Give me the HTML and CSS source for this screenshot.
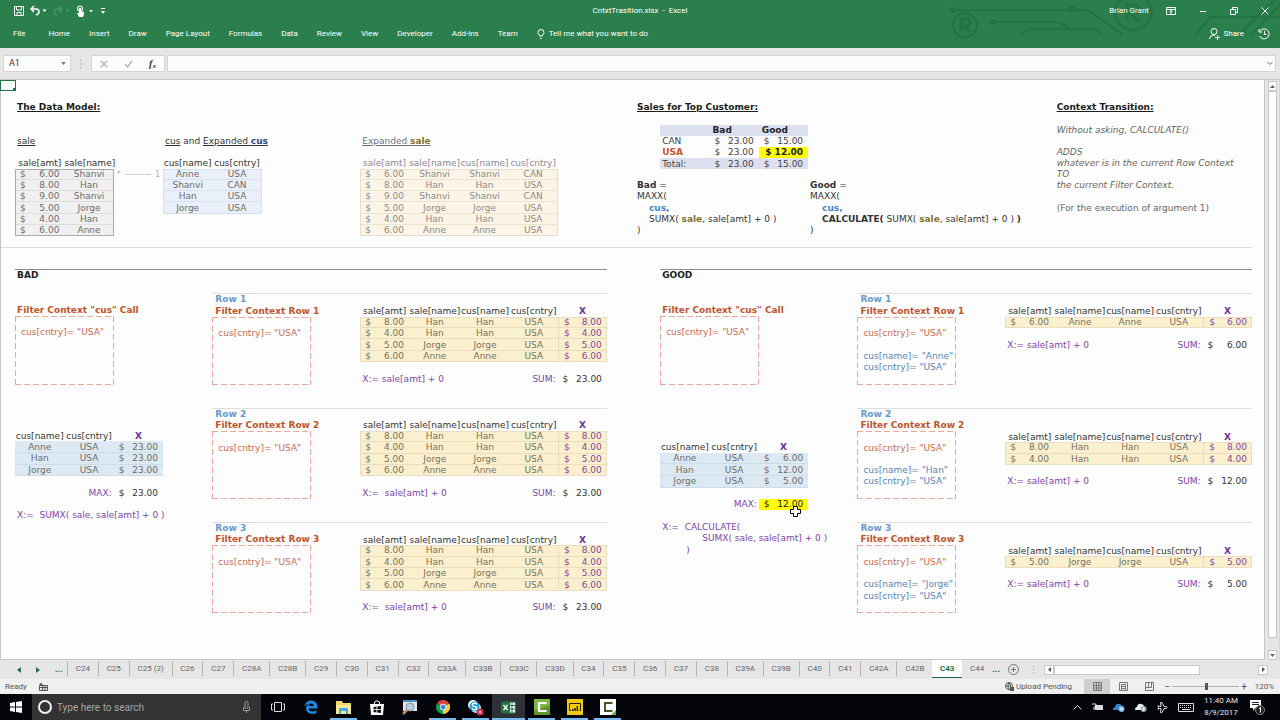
FILE: index.html
```html
<!DOCTYPE html>
<html lang="en">
<head>
<meta charset="utf-8">
<title>CntxtTrasition.xlsx - Excel</title>
<link rel="stylesheet" href="styles.css">
</head>
<body>
<header class="ribbon">
  <svg class="circuit" width="330" height="48" viewBox="0 0 330 48" fill="none" stroke="#1f6e3e" stroke-width="2">
    <path d="M2 10H138L172 34M42 22H108L120 28M70 34L80 29H146L152 34M246 35L260 17H330M290 34L324 0M302 34L330 4"/>
    <circle cx="15" cy="25" r="12"/><circle cx="183" cy="12" r="18" stroke-width="3"/>
    <path d="M11 31V19H16Q20 19 20 22T16 25H12L20 31M177 20V5H184Q190 5 190 9T184 13H178L190 21" stroke-width="3"/>
    <circle cx="3" cy="10" r="2"/><circle cx="43" cy="22" r="2"/><circle cx="122" cy="9" r="2"/>
  </svg>
  <div class="titlebar">
    <div class="quick">
      <button aria-label="Save"><svg width="10" height="11" viewBox="0 0 10 11" fill="none" stroke="#fff"><path d="M.5 1.500H9.500V10.500H.5ZM2.500 1.500V5H7.500V1.500M3 10V7.500H7V10"/></svg></button>
      <button aria-label="Undo"><svg width="17" height="11" viewBox="0 0 17 11" fill="none" stroke="#fff" stroke-width="1.500"><path d="M4 1L1 4L4 7M1 4H6Q9 4 9 7Q9 9 6 10"/><path d="M12.500 4.500H16.500L14.500 7Z" fill="#fff" stroke="none"/></svg></button>
      <button aria-label="Redo" class="dim"><svg width="17" height="11" viewBox="0 0 17 11" fill="none" stroke="#6fae86" stroke-width="1.500"><path d="M6 1L9 4L6 7M9 4H4Q1 4 1 7Q1 9 4 10"/><path d="M12.500 4.500H16.500L14.500 7Z" fill="#6fae86" stroke="none"/></svg></button>
      <button aria-label="Touch mode"><svg width="18" height="12" viewBox="0 0 18 12"><circle cx="4" cy="3.500" r="2.500" fill="none" stroke="#fff" stroke-width="1.200"/><path d="M3 3H5V6L8 7V9L7 12H3L1 8L3 8Z" fill="#fff"/><path d="M13 5H17L15 7.500Z" fill="#fff"/></svg></button>
      <button aria-label="Customize toolbar"><svg width="6" height="8" viewBox="0 0 6 8"><path d="M1 1H5V2H1ZM1 4H5L3 7Z" fill="#fff"/></svg></button>
    </div>
    <h1 class="doc-title">CntxtTrasition.xlsx&nbsp; -&nbsp; Excel</h1>
    <div class="window">
      <span class="user">Brian Grant</span>
      <button aria-label="Ribbon display"><svg width="10" height="8" viewBox="0 0 10 8" fill="none" stroke="#fff"><path d="M.5.500H9.500V7.500H.5ZM.5 2.500H9.500M5 7V3.500M3.500 5L5 3.500L6.500 5"/></svg></button>
      <button aria-label="Minimize"><svg width="8" height="8" viewBox="0 0 8 8" stroke="#fff"><path d="M1 4.500H7"/></svg></button>
      <button aria-label="Restore"><svg width="8" height="8" viewBox="0 0 8 8" fill="none" stroke="#fff"><path d="M.5 2.500H5.500V7.500H.5ZM2.500 2.500V.5H7.500V5.500H5.500"/></svg></button>
      <button aria-label="Close"><svg width="8" height="8" viewBox="0 0 8 8" stroke="#fff"><path d="M.5.500L7.500 7.500M7.500.500L.5 7.500"/></svg></button>
    </div>
  </div>
  <nav class="menu">
    <button class="file">File</button><button>Home</button><button>Insert</button><button>Draw</button><button>Page Layout</button><button>Formulas</button><button>Data</button><button>Review</button><button>View</button><button>Developer</button><button>Add-ins</button><button>Team</button>
    <button class="tell"><svg width="8" height="10" viewBox="0 0 8 10" fill="none" stroke="#fff"><path d="M2.500 7V6Q1 5 1 3.500A3 3 0 0 1 7 3.500Q7 5 5.500 6V7ZM3 9.500H5"/></svg>Tell me what you want to do</button>
    <button class="share"><svg width="11" height="12" viewBox="0 0 11 12" fill="none" stroke="#fff"><circle cx="5" cy="3.500" r="3"/><path d="M.5 11Q1 7 5 7L6 7.500M8.500 7V12M6 9.500H11"/></svg>Share</button>
    <button aria-label="History"><svg width="12" height="12" viewBox="0 0 12 12" fill="none" stroke="#fff"><path d="M2 3A5 5 0 1 1 1.500 8M1 1V4H4M6.500 3V6.500H8.500"/></svg></button>
  </nav>
</header>

<div class="formula-bar">
  <button class="name-box">A1<svg width="5" height="3" viewBox="0 0 6 4"><path d="M0 0H6L3 4Z" fill="#777"/></svg></button>
  <svg class="grip" width="2" height="10" viewBox="0 0 2 10" fill="#bbb"><path d="M0 0H1V2H0ZM0 4H1V6H0ZM0 8H1V10H0Z"/></svg>
  <div class="fx-buttons">
    <button aria-label="Cancel"><svg width="8" height="8" viewBox="0 0 8 8" stroke="#b5b5b5" stroke-width="1.500"><path d="M1 1L7 7M7 1L1 7"/></svg></button>
    <button aria-label="Enter"><svg width="9" height="8" viewBox="0 0 9 8" fill="none" stroke="#b5b5b5" stroke-width="1.500"><path d="M1 4L3.500 7L8 1"/></svg></button>
    <button class="fx" aria-label="Insert function">f<small>x</small></button>
  </div>
  <div class="entry"><input type="text" aria-label="Formula"><svg width="6" height="5" viewBox="0 0 6 5" fill="none" stroke="#666"><path d="M.5 1L3 3.500L5.500 1"/></svg></div>
</div>

<div class="workspace">
<main class="sheet">
  <span class="active-cell"></span>
  <section class="overview">
    <h2 class="t-model under">The Data Model:</h2>
    <div class="t-sale"><u>sale</u></div>
    <table class="tbl gray g-sale">
      <thead><tr><th>sale[amt]</th><th>sale[name]</th></tr></thead>
      <tbody>
      <tr><td class="m"><i>$</i>6.00</td><td>Shanvi</td></tr><tr><td class="m"><i>$</i>8.00</td><td>Han</td></tr><tr><td class="m"><i>$</i>9.00</td><td>Shanvi</td></tr><tr><td class="m"><i>$</i>5.00</td><td>Jorge</td></tr><tr><td class="m"><i>$</i>4.00</td><td>Han</td></tr><tr><td class="m"><i>$</i>6.00</td><td>Anne</td></tr>
      </tbody>
    </table>
    <div class="relation"><span>*</span><hr><span>1</span></div>
    <div class="t-cus"><u>cus</u> and <u>Expanded <b class="navy">cus</b></u></div>
    <table class="tbl pale g-cus">
      <thead><tr><th>cus[name]</th><th>cus[cntry]</th></tr></thead>
      <tbody><tr><td>Anne</td><td>USA</td></tr><tr><td>Shanvi</td><td>CAN</td></tr><tr><td>Han</td><td>USA</td></tr><tr><td>Jorge</td><td>USA</td></tr></tbody>
    </table>
    <div class="t-exp"><u>Expanded <b class="olive">sale</b></u></div>
    <table class="tbl cream g-exp">
      <thead><tr><th>sale[amt]</th><th class="wide">sale[name]</th><th>cus[name]</th><th>cus[cntry]</th></tr></thead>
      <tbody>
      <tr><td class="m"><i>$</i>6.00</td><td>Shanvi</td><td>Shanvi</td><td>CAN</td></tr>
      <tr><td class="m"><i>$</i>8.00</td><td>Han</td><td>Han</td><td>USA</td></tr>
      <tr><td class="m"><i>$</i>9.00</td><td>Shanvi</td><td>Shanvi</td><td>CAN</td></tr>
      <tr><td class="m"><i>$</i>5.00</td><td>Jorge</td><td>Jorge</td><td>USA</td></tr>
      <tr><td class="m"><i>$</i>4.00</td><td>Han</td><td>Han</td><td>USA</td></tr>
      <tr><td class="m"><i>$</i>6.00</td><td>Anne</td><td>Anne</td><td>USA</td></tr>
      </tbody>
    </table>
    <h2 class="t-top under">Sales for Top Customer:</h2>
    <table class="tbl summary g-sum">
      <thead><tr><th></th><th>Bad</th><th>Good</th></tr></thead>
      <tbody>
      <tr><td>CAN</td><td class="m"><i>$</i>23.00</td><td class="m"><i>$</i>15.00</td></tr>
      <tr><td class="rust"><b>USA</b></td><td class="m"><i>$</i>23.00</td><td class="m hot"><b>$ 12.00</b></td></tr>
      </tbody>
      <tfoot><tr><td>Total:</td><td class="m"><i>$</i>23.00</td><td class="m"><i>$</i>15.00</td></tr></tfoot>
    </table>
    <div class="lines f-bad"><p><b>Bad</b> =</p><p>MAXX(</p><p class="in"><b class="blue">cus,</b></p><p class="in">SUMX( <b class="olive">sale</b>, sale[amt] + 0 )</p><p>)</p></div>
    <div class="lines f-good"><p><b>Good</b> =</p><p>MAXX(</p><p class="in"><b class="blue">cus,</b></p><p class="in"><b>CALCULATE(</b> SUMX( <b class="olive">sale</b>, sale[amt] + 0 ) <b>)</b></p><p>)</p></div>
    <h2 class="t-trans under">Context Transition:</h2>
    <div class="lines note"><p><em>Without asking, CALCULATE()</em></p><p></p><p><em>ADDS</em></p><p><em>whatever is in the current Row Context</em></p><p><em>TO</em></p><p><em>the current Filter Context.</em></p><p></p><p>(For the execution of argument 1)</p></div>
  </section>

  <section class="scenario bad">
    <h2 class="name">BAD</h2>
    <h3 class="call">Filter Context "cus" Call</h3>
    <div class="box call-box"><p>cus[cntry]= "USA"</p></div>
    <table class="tbl ice result">
      <thead><tr><th>cus[name]</th><th>cus[cntry]</th><th class="x">X</th></tr></thead>
      <tbody><tr><td>Anne</td><td>USA</td><td class="m"><i>$</i>23.00</td></tr><tr><td>Han</td><td>USA</td><td class="m"><i>$</i>23.00</td></tr><tr><td>Jorge</td><td>USA</td><td class="m"><i>$</i>23.00</td></tr></tbody>
    </table>
    <div class="total max"><span class="label">MAX:</span><span class="m"><i>$</i>23.00</span></div>
    <div class="lines purple calc"><p>X:=&nbsp; SUMX( sale, sale[amt] + 0 )</p></div>

    <article class="step s1">
      <h3 class="row-name">Row 1</h3><h3 class="ctx">Filter Context Row 1</h3>
      <div class="box"><p>cus[cntry]= "USA"</p></div>
      <table class="tbl gold n4"><thead><tr><th>sale[amt]</th><th class="wide">sale[name]</th><th>cus[name]</th><th>cus[cntry]</th><th class="x">X</th></tr></thead>
      <tbody><tr><td class="m"><i>$</i>8.00</td><td>Han</td><td>Han</td><td>USA</td><td class="m v"><i>$</i>8.00</td></tr><tr><td class="m"><i>$</i>4.00</td><td>Han</td><td>Han</td><td>USA</td><td class="m v"><i>$</i>4.00</td></tr><tr><td class="m"><i>$</i>5.00</td><td>Jorge</td><td>Jorge</td><td>USA</td><td class="m v"><i>$</i>5.00</td></tr><tr><td class="m"><i>$</i>6.00</td><td>Anne</td><td>Anne</td><td>USA</td><td class="m v"><i>$</i>6.00</td></tr></tbody></table>
      <div class="total sum4"><span class="expr">X:= sale[amt] + 0</span><span class="label">SUM:</span><span class="m"><i>$</i>23.00</span></div>
    </article>
    <article class="step s2">
      <h3 class="row-name">Row 2</h3><h3 class="ctx">Filter Context Row 2</h3>
      <div class="box"><p>cus[cntry]= "USA"</p></div>
      <table class="tbl gold n4"><thead><tr><th>sale[amt]</th><th class="wide">sale[name]</th><th>cus[name]</th><th>cus[cntry]</th><th class="x">X</th></tr></thead>
      <tbody><tr><td class="m"><i>$</i>8.00</td><td>Han</td><td>Han</td><td>USA</td><td class="m v"><i>$</i>8.00</td></tr><tr><td class="m"><i>$</i>4.00</td><td>Han</td><td>Han</td><td>USA</td><td class="m v"><i>$</i>4.00</td></tr><tr><td class="m"><i>$</i>5.00</td><td>Jorge</td><td>Jorge</td><td>USA</td><td class="m v"><i>$</i>5.00</td></tr><tr><td class="m"><i>$</i>6.00</td><td>Anne</td><td>Anne</td><td>USA</td><td class="m v"><i>$</i>6.00</td></tr></tbody></table>
      <div class="total sum4"><span class="expr">X:=&nbsp; sale[amt] + 0</span><span class="label">SUM:</span><span class="m"><i>$</i>23.00</span></div>
    </article>
    <article class="step s3">
      <h3 class="row-name">Row 3</h3><h3 class="ctx">Filter Context Row 3</h3>
      <div class="box"><p>cus[cntry]= "USA"</p></div>
      <table class="tbl gold n4"><thead><tr><th>sale[amt]</th><th class="wide">sale[name]</th><th>cus[name]</th><th>cus[cntry]</th><th class="x">X</th></tr></thead>
      <tbody><tr><td class="m"><i>$</i>8.00</td><td>Han</td><td>Han</td><td>USA</td><td class="m v"><i>$</i>8.00</td></tr><tr><td class="m"><i>$</i>4.00</td><td>Han</td><td>Han</td><td>USA</td><td class="m v"><i>$</i>4.00</td></tr><tr><td class="m"><i>$</i>5.00</td><td>Jorge</td><td>Jorge</td><td>USA</td><td class="m v"><i>$</i>5.00</td></tr><tr><td class="m"><i>$</i>6.00</td><td>Anne</td><td>Anne</td><td>USA</td><td class="m v"><i>$</i>6.00</td></tr></tbody></table>
      <div class="total sum4"><span class="expr">X:=&nbsp; sale[amt] + 0</span><span class="label">SUM:</span><span class="m"><i>$</i>23.00</span></div>
    </article>
  </section>

  <section class="scenario good">
    <h2 class="name">GOOD</h2>
    <h3 class="call">Filter Context "cus" Call</h3>
    <div class="box call-box"><p>cus[cntry]= "USA"</p></div>
    <table class="tbl ice result">
      <thead><tr><th>cus[name]</th><th>cus[cntry]</th><th class="x">X</th></tr></thead>
      <tbody><tr><td>Anne</td><td>USA</td><td class="m"><i>$</i>6.00</td></tr><tr><td>Han</td><td>USA</td><td class="m"><i>$</i>12.00</td></tr><tr><td>Jorge</td><td>USA</td><td class="m"><i>$</i>5.00</td></tr></tbody>
    </table>
    <div class="total max"><span class="label">MAX:</span><span class="m hot"><i>$</i>12.00<svg class="pointer" width="11" height="11" viewBox="0 0 11 11" fill="#fff" stroke="#000"><path d="M3.500.500H7.500V3.500H10.500V7.500H7.500V10.500H3.500V7.500H.5V3.500H3.500Z"/></svg></span></div>
    <div class="lines purple calc"><p>X:=&nbsp; CALCULATE(</p><p class="in3">SUMX( sale, sale[amt] + 0 )</p><p class="in2">)</p></div>

    <article class="step s1">
      <h3 class="row-name">Row 1</h3><h3 class="ctx">Filter Context Row 1</h3>
      <div class="box"><p>cus[cntry]= "USA"</p><p class="added">cus[name]= "Anne"</p><p class="added">cus[cntry]= "USA"</p></div>
      <table class="tbl gold n1"><thead><tr><th>sale[amt]</th><th class="wide">sale[name]</th><th>cus[name]</th><th>cus[cntry]</th><th class="x">X</th></tr></thead>
      <tbody><tr><td class="m"><i>$</i>6.00</td><td>Anne</td><td>Anne</td><td>USA</td><td class="m v"><i>$</i>6.00</td></tr></tbody></table>
      <div class="total sum1"><span class="expr">X:= sale[amt] + 0</span><span class="label">SUM:</span><span class="m"><i>$</i>6.00</span></div>
    </article>
    <article class="step s2">
      <h3 class="row-name">Row 2</h3><h3 class="ctx">Filter Context Row 2</h3>
      <div class="box"><p>cus[cntry]= "USA"</p><p class="added">cus[name]= "Han"</p><p class="added">cus[cntry]= "USA"</p></div>
      <table class="tbl gold n2"><thead><tr><th>sale[amt]</th><th class="wide">sale[name]</th><th>cus[name]</th><th>cus[cntry]</th><th class="x">X</th></tr></thead>
      <tbody><tr><td class="m"><i>$</i>8.00</td><td>Han</td><td>Han</td><td>USA</td><td class="m v"><i>$</i>8.00</td></tr><tr><td class="m"><i>$</i>4.00</td><td>Han</td><td>Han</td><td>USA</td><td class="m v"><i>$</i>4.00</td></tr></tbody></table>
      <div class="total sum2"><span class="expr">X:= sale[amt] + 0</span><span class="label">SUM:</span><span class="m"><i>$</i>12.00</span></div>
    </article>
    <article class="step s3">
      <h3 class="row-name">Row 3</h3><h3 class="ctx">Filter Context Row 3</h3>
      <div class="box"><p>cus[cntry]= "USA"</p><p class="added">cus[name]= "Jorge"</p><p class="added">cus[cntry]= "USA"</p></div>
      <table class="tbl gold n3"><thead><tr><th>sale[amt]</th><th class="wide">sale[name]</th><th>cus[name]</th><th>cus[cntry]</th><th class="x">X</th></tr></thead>
      <tbody><tr><td class="m"><i>$</i>5.00</td><td>Jorge</td><td>Jorge</td><td>USA</td><td class="m v"><i>$</i>5.00</td></tr></tbody></table>
      <div class="total sum3"><span class="expr">X:= sale[amt] + 0</span><span class="label">SUM:</span><span class="m"><i>$</i>5.00</span></div>
    </article>
  </section>
</main>
<div class="vscroll">
  <button aria-label="Scroll up"><svg width="5" height="3" viewBox="0 0 5 3"><path d="M0 3L2.500 0L5 3Z" fill="#666"/></svg></button>
  <div class="thumb"></div>
  <button aria-label="Scroll down"><svg width="5" height="3" viewBox="0 0 5 3"><path d="M0 0L2.500 3L5 0Z" fill="#666"/></svg></button>
</div>
</div>

<div class="tabbar">
  <div class="tab-nav">
    <button aria-label="Previous sheets"><svg width="4" height="6" viewBox="0 0 4 6"><path d="M4 0V6L0 3Z" fill="#217346"/></svg></button>
    <button aria-label="Next sheets"><svg width="4" height="6" viewBox="0 0 4 6"><path d="M0 0V6L4 3Z" fill="#217346"/></svg></button>
    <button class="dots">...</button>
  </div>
  <div class="tabs">
    <button>C24</button><button>C25</button><button>C25 (2)</button><button>C26</button><button>C27</button><button>C28A</button><button>C28B</button><button>C29</button><button>C30</button><button>C31</button><button>C32</button><button>C33A</button><button>C33B</button><button>C33C</button><button>C33D</button><button>C34</button><button>C35</button><button>C36</button><button>C37</button><button>C38</button><button>C39A</button><button>C39B</button><button>C40</button><button>C41</button><button>C42A</button><button>C42B</button><button class="on">C43</button><button>C44</button>
  </div>
  <button class="dots">...</button>
  <button class="add" aria-label="New sheet"><svg width="11" height="11" viewBox="0 0 11 11" fill="none" stroke="#777"><circle cx="5.500" cy="5.500" r="5"/><path d="M5.500 3V8M3 5.500H8"/></svg></button>
  <svg class="grip" width="2" height="8" viewBox="0 0 2 8" fill="#aaa"><path d="M0 0H1V1H0ZM0 3H1V4H0ZM0 6H1V7H0Z"/></svg>
  <div class="hscroll">
    <button aria-label="Scroll left"><svg width="3" height="5" viewBox="0 0 3 5"><path d="M3 0V5L0 2.500Z" fill="#555"/></svg></button>
    <div class="thumb"></div>
    <button aria-label="Scroll right"><svg width="3" height="5" viewBox="0 0 3 5"><path d="M0 0V5L3 2.500Z" fill="#555"/></svg></button>
  </div>
</div>

<footer class="status">
  <span class="ready">Ready</span>
  <svg width="9" height="8" viewBox="0 0 9 8" fill="none" stroke="#555"><path d="M.5 2.500H8.500V7.500H.5ZM.5 4.500H8.500M3.500 2.500V7.500M6 2.500V7.500"/><circle cx="2" cy="1.500" r="1.500" fill="#555" stroke="none"/></svg>
  <span class="upload"><svg width="9" height="9" viewBox="0 0 9 9" fill="none" stroke="#555"><circle cx="4" cy="4" r="3.500"/><path d="M4 .5Q1.500 4 4 7.500M4 .5Q6 3 5.500 5M.5 4H5"/><path d="M5 5H9V9H5Z" fill="#555" stroke="none"/></svg>Upload Pending</span>
  <button class="view on" aria-label="Normal view"><svg width="9" height="9" viewBox="0 0 9 9" fill="none" stroke="#777"><path d="M.5.500H8.500V8.500H.5ZM.5 3.500H8.500M.5 6H8.500M3.500.500V8.500M6 .5V8.500"/></svg></button>
  <button class="view" aria-label="Page layout view"><svg width="9" height="9" viewBox="0 0 9 9" fill="none" stroke="#777"><path d="M.5.500H8.500V8.500H.5ZM2.500 2.500H6.500V8.500M2.500 2.500V8.500M3 4.500H6M3 6.500H6"/></svg></button>
  <button class="view" aria-label="Page break view"><svg width="9" height="9" viewBox="0 0 9 9" fill="none" stroke="#777"><path d="M.5.500H8.500V8.500H.5ZM3.500.500V5.500M6.500.500V5.500H.5"/></svg></button>
  <span class="sign">−</span>
  <input type="range" min="10" max="190" value="102" aria-label="Zoom">
  <span class="sign">+</span>
  <span class="pct">120%</span>
</footer>

<div class="taskbar">
  <button class="start" aria-label="Start"><svg width="12" height="12" viewBox="0 0 12 12" fill="#fff"><path d="M0 2L5 1V5.500H0ZM6 1L12 0V5.500H6ZM0 6.500H5V11L0 10ZM6 6.500H12V12L6 11Z"/></svg></button>
  <label class="search"><svg width="14" height="14" viewBox="0 0 14 14" fill="none" stroke="#f0f0f0" stroke-width="2"><circle cx="7" cy="7" r="6"/></svg><input type="text" placeholder="Type here to search" aria-label="Search"><svg width="7" height="12" viewBox="0 0 7 12" fill="none" stroke="#999"><rect x="2" y=".5" width="3" height="7" rx="1.500"/><path d="M.5 6V9.500H6.500V6M3.500 9.500V12"/></svg></label>
  <div class="apps">
    <button aria-label="Task view"><svg width="14" height="10" viewBox="0 0 14 10" fill="none" stroke="#ddd"><path d="M3.500.500H10.500V9.500H3.500ZM2 2H.5V8H2M12 2H13.500V8H12"/></svg></button>
    <button aria-label="Edge"><svg width="14" height="14" viewBox="0 0 14 14"><path d="M.5 6.500C1 2.500 4 .5 7 .5C11 .5 13.500 3.500 13.500 7V8.500H4.500C5 12 9.500 12 12.500 10.200V13C8 15 2 13.500 2 8.500C2 6 3.500 4.500 5 3.800C3 4 1.500 5 .5 6.500ZM4.700 6H9.800C9.800 2.500 5 2.500 4.700 6Z" fill="#1e88e0"/></svg></button>
    <button class="open" aria-label="File explorer"><svg width="15" height="13" viewBox="0 0 15 13"><path d="M0 0H6L7 2H15V13H0Z" fill="#f3d56b"/><path d="M0 4H15V13H0Z" fill="#fbe798"/><path d="M3 7H12V13H10V10H5V13H3Z" fill="#3fa9e0"/></svg></button>
    <button aria-label="Store"><svg width="14" height="15" viewBox="0 0 14 15"><path d="M0 4H14L13 15H1Z" fill="#fff"/><path d="M4.500 4V2Q7 -.5 9.500 2V4" fill="none" stroke="#fff"/><path d="M3.500 7L6.500 6.500V9H3.500ZM7.300 6.400L11 6V9H7.300ZM3.500 9.800H6.500V12.500L3.500 12ZM7.300 9.800H11V13L7.300 12.600Z" fill="#111"/></svg></button>
    <button aria-label="Magnifier"><svg width="15" height="15" viewBox="0 0 15 15"><path d="M1 0H15V11H1Z" fill="#dfe6ea"/><path d="M1 0H15V2H1Z" fill="#4b91c7"/><circle cx="8" cy="7" r="4" fill="#b7cddb" stroke="#8b9aa5"/><path d="M5 10L1 14" stroke="#c78a55" stroke-width="2.500"/></svg></button>
    <button class="open" aria-label="Chrome"><svg width="14" height="14" viewBox="0 0 14 14"><path d="M7 7L.9 3.500A7 7 0 0 1 13.100 3.500Z" fill="#db4437"/><path d="M7 7L13.100 3.500A7 7 0 0 1 7 14Z" fill="#ffcd40"/><path d="M7 7V14A7 7 0 0 1 .9 3.500Z" fill="#0f9d58"/><circle cx="7" cy="7" r="3.200" fill="#fff"/><circle cx="7" cy="7" r="2.500" fill="#4285f4"/></svg></button>
    <button class="open" aria-label="Skype"><svg width="17" height="17" viewBox="0 0 17 17"><circle cx="6" cy="6" r="5" fill="#e8f6fc"/><circle cx="9" cy="9" r="5" fill="#e8f6fc"/><circle cx="7.500" cy="7.500" r="5" fill="#16a5dd"/><path d="M10 5.300Q9 4 7.300 4.200Q5.200 4.500 5.300 6T7.500 7.500T9.800 9T7.500 10.800Q5.600 10.800 5 9.500" fill="none" stroke="#fff" stroke-width="1.400"/><circle cx="13" cy="13" r="3.500" fill="#d3224b"/><path d="M11.500 11.500L14.500 14.500M14.500 11.500L11.500 14.500" stroke="#fff" stroke-width=".8"/></svg></button>
    <button class="open current" aria-label="Excel"><svg width="15" height="13" viewBox="0 0 15 13"><path d="M8 1H14.500V12H8Z" fill="#fff" stroke="#217346"/><path d="M8 4.500H14M8 8H14M11 1V12" stroke="#217346"/><path d="M0 1L9 0V13L0 12Z" fill="#217346"/><path d="M2.500 4L6.500 9M6.500 4L2.500 9" stroke="#fff" stroke-width="1.300"/></svg></button>
    <button class="open" aria-label="Camtasia"><svg width="16" height="16" viewBox="0 0 16 16"><path d="M0 0H16V16H0Z" fill="#5f962f"/><path d="M0 0H16V6L0 12Z" fill="#7fb542"/><path d="M11.500 5V4H5V12H11.500V11" fill="none" stroke="#fff" stroke-width="2.200"/></svg></button>
    <button class="open" aria-label="Power BI"><svg width="16" height="16" viewBox="0 0 16 16"><path d="M0 0H16V16H0Z" fill="#f2c811"/><path d="M12 11.500H13.500V4.500H2.500V11.500H4" fill="none" stroke="#222"/><path d="M5 12V10H6.500V12ZM7.300 12V9H8.800V12ZM9.600 12V7H11V12Z" fill="#222"/></svg></button>
    <button class="open" aria-label="Camtasia recorder"><svg width="16" height="16" viewBox="0 0 16 16"><path d="M0 0H16V14L14 16H0Z" fill="#fff"/><path d="M11.500 5V4H5V12H11.500V11" fill="none" stroke="#41592a" stroke-width="2"/><path d="M11 16L16 11V16Z" fill="#75a944"/></svg></button>
  </div>
  <div class="tray">
    <svg width="9" height="5" viewBox="0 0 9 5" fill="none" stroke="#ddd"><path d="M.5 4.500L4.500.500L8.500 4.500"/></svg>
    <svg width="11" height="8" viewBox="0 0 11 8"><path d="M3 2H11V7H3Z" fill="#ddd"/><path d="M0 1H4V4H2V7" fill="none" stroke="#ddd"/></svg>
    <svg width="12" height="9" viewBox="0 0 12 9"><path d="M0 7Q0 4 2 4Q3 0 6 1Q9 1 9 4V7Z" fill="#3483c7"/><circle cx="8.500" cy="6" r="3" fill="#75b7e6"/><path d="M7 6H10M8.500 4.500V7.500" stroke="#fff"/></svg>
    <svg width="12" height="9" viewBox="0 0 12 9"><path d="M0 7Q0 4 2 4Q3 0 6 1Q9 1 9 4V7Z" fill="#eee"/><circle cx="8.500" cy="6" r="3" fill="#9fb0c0"/><path d="M7 6H10M8.500 4.500V7.500" stroke="#fff"/></svg>
    <svg width="11" height="11" viewBox="0 0 11 11" fill="none" stroke="#ddd"><path d="M1 3.500L2.500 4.500H4L3.500.500H5L7 4.500H9.500Q11 5.500 9.500 6.500H7L5 10.500H3.500L4 6.500H2.500L1 7.500L1.500 5.500Z"/></svg>
    <svg width="16" height="9" viewBox="0 0 16 9" fill="none" stroke="#ddd"><path d="M.5.500H15.500V8.500H.5Z"/><path d="M2 2.500H14M2 4.500H14" stroke-dasharray="1 1"/><path d="M4 6.500H12"/></svg>
    <div class="clock"><span>11:40 AM</span><span>8/9/2017</span></div>
    <svg width="15" height="15" viewBox="0 0 15 15"><path d="M0 0H11V8H5L3 11V8H0Z" fill="#fff"/><path d="M2 2.500H9M2 4.500H9" stroke="#222"/><circle cx="10" cy="10" r="4.500" fill="#222" stroke="#888"/><path d="M9 8.500L10.500 7.500V12.500" fill="none" stroke="#fff"/></svg>
  </div>
</div>
</body>
</html>
```
FILE: styles.css
```css
* { box-sizing: border-box; }
body {
  margin: 0;
  min-height: 100vh;
  display: flex;
  flex-direction: column;
  background: #e6e6e6;
  color: #333;
  font: 8px/11px Roboto, "Open Sans", sans-serif;
}
button {
  margin: 0;
  padding: 0;
  border: 0;
  background: none;
  color: inherit;
  font: inherit;
  display: flex;
  align-items: center;
  justify-content: center;
  white-space: nowrap;
}
input { border: 0; margin: 0; padding: 0; background: none; font: inherit; min-width: 0; outline: 0; }
h1, h2, h3, p { margin: 0; font-size: inherit; line-height: inherit; }
svg { display: block; flex: none; }

/* Ribbon */
.ribbon { position: relative; height: 48px; background: #2a7f4c; color: #fff; }
.circuit { position: absolute; top: 0; right: 0; opacity: 0.6; }
.titlebar { position: relative; height: 21px; display: grid; grid-template-columns: 1fr auto 1fr; align-items: center; }
.quick { display: flex; align-items: center; gap: 6px; padding-left: 14px; }
.quick .dim { opacity: 0.5; }
.doc-title { font-weight: 400; }
.window { display: flex; align-items: center; justify-content: flex-end; gap: 23px; padding-right: 11px; }
.user { margin-right: -6px; }
.menu { position: relative; height: 25px; display: flex; align-items: center; gap: 19px; padding: 0 10px 0 13px; }
.file { margin-right: 4px; }
.tell { gap: 4px; }
.share { gap: 4px; margin-left: auto; }
.share + button { margin-left: -5px; }

/* Formula bar */
.formula-bar { height: 31px; display: flex; align-items: center; padding: 0 4px 0 3px; }
.name-box { width: 68px; height: 17px; padding: 0 4px 0 5px; justify-content: space-between; background: #fcfcfc; border: 1px solid #d2d2d2; font-size: 9px; }
.formula-bar .grip { margin: 0 9px; }
.fx-buttons { width: 74px; height: 17px; display: flex; align-items: center; justify-content: space-around; background: #fcfcfc; border: 1px solid #d2d2d2; }
.fx { font: italic 700 10px "Liberation Serif", serif; }
.fx small { font-size: 7px; padding-top: 4px; }
.entry { flex: 1; height: 17px; margin-left: 2px; padding-right: 2px; display: flex; align-items: center; background: #fcfcfc; border: 1px solid #d2d2d2; }
.entry input { flex: 1; }

/* Sheet */
.workspace { flex: 1; display: flex; }
.sheet {
  position: relative;
  flex: 1;
  display: grid;
  grid-template-columns: minmax(0, 14fr) minmax(0, 588fr) minmax(0, 53fr) minmax(0, 588fr) minmax(0, 12fr);
  grid-template-rows: minmax(0, 190fr) minmax(0, 391fr);
  background: #fdfdfd;
  border: 1px solid #c6c6c6;
  font: 9px/11px "DejaVu Sans", sans-serif;
  color: #333;
  white-space: nowrap;
}
.active-cell { position: absolute; left: -1px; top: 0; width: 16px; height: 11px; border: 1px solid #217346; }
.active-cell::after { content: ""; position: absolute; right: -1px; bottom: -1px; width: 3px; height: 3px; background: #217346; }
.overview {
  grid-column: 1 / -1;
  display: grid;
  grid-template-columns: minmax(0, 14fr) repeat(12, minmax(0, 49fr)) minmax(0, 28fr) minmax(0, 25fr) repeat(12, minmax(0, 49fr)) minmax(0, 12fr);
  grid-template-rows: repeat(17, minmax(0, 1fr));
}
.overview::after { content: ""; grid-area: 16 / 1 / 17 / 28; border-top: 1px solid #dcdcdc; }
.overview > div, .overview > h2 { padding-left: 2px; }
.under { text-decoration: underline; color: #1c1c1c; }
.t-model { grid-area: 3 / 2; }
.t-sale { grid-area: 6 / 2; }
.g-sale { grid-area: 8 / 2 / 15 / 4; }
.t-cus { grid-area: 6 / 5; }
.g-cus { grid-area: 8 / 5 / 13 / 7; }
.t-exp { grid-area: 6 / 9; color: #6b6f86; }
.g-exp { grid-area: 8 / 9 / 15 / 13; }
.t-top { grid-area: 3 / 15; }
.g-sum { grid-area: 5 / 16 / 9 / 19; }
.f-bad { grid-area: 10 / 15 / 15 / 19; }
.f-good { grid-area: 10 / 19 / 15 / 24; }
.t-trans { grid-area: 3 / 24; }
.note { grid-area: 5 / 24 / 13 / 28; color: #666; }
.overview > .relation { grid-area: 9 / 4; display: flex; align-items: center; gap: 4px; padding: 0 3px; color: #b0b0b0; font-size: 8px; line-height: 8px; }
.relation hr { flex: 1; margin: 0; border: 0; border-top: 1px solid #d0d0d0; }

.lines { display: grid; grid-auto-rows: minmax(0, 1fr); }
.in { padding-left: 12px; }
.in2 { padding-left: 24px; }
.in3 { padding-left: 40px; }
.rust { color: #c8562e; }
.blue { color: #4a86c5; }
.navy { color: #30487f; }
.olive { color: #84702a; }
.purple { color: #7c46ac; }
.hot { background: #ffff00; color: #222; }

/* Data tables */
.tbl { width: 100%; height: 100%; table-layout: fixed; border-collapse: separate; border-spacing: 0; }
.tbl th, .tbl td { padding: 0; height: 11px; line-height: 10px; text-align: center; font-weight: 400; }
.tbl th { color: #333; }
.gold .wide { width: 21%; }
.cream .wide { width: 26%; }
.tbl .x { color: #6c2fa0; font-weight: 700; }
.tbl td.m, .total .m { padding: 0 5px; text-align: right; }
.m i { float: left; font-style: normal; }
.tbl tbody td { border-bottom: 1px solid #ddd; color: #6c6c6c; }
.gray tbody { background: #f0f0f0; outline: 1px solid #aaa; outline-offset: -1px; }
.pale tbody { background: #eaf0fa; outline: 1px solid #d4deee; outline-offset: -1px; }
.pale tbody td { border-color: #dae2f0; }
.cream tbody { background: #fcf4e6; outline: 1px solid #e0e0c8; outline-offset: -1px; }
.cream tbody td { border-color: #e7e5d0; color: #8e8a86; }
.tbl.cream th { color: #8d8794; }
.ice tbody { background: #dce9f3; }
.ice tbody td { border-color: #ccdcea; }
.gold tbody { background: #fbf0cd; outline: 1px solid #ecdcc4; outline-offset: -1px; }
.gold tbody td { border-color: #ebdcc0; color: #77705e; }
.tbl tbody td.v { color: #83479a; border-left: 1px solid #ebdcc0; }
.summary thead, .summary tfoot { background: #dcdff0; }
.tbl.summary th { text-align: left; font-weight: 700; padding-left: 3px; color: #222; }
.tbl.summary td { border: 0; color: #444; }
.tbl.summary td:first-child { text-align: left; padding-left: 2px; }
.tbl.summary td.rust { color: #c8562e; }
.tbl.summary td.hot { color: #222; }

/* Scenarios */
.scenario {
  display: grid;
  grid-template-columns: repeat(12, minmax(0, 1fr));
  grid-template-rows: repeat(34, minmax(0, 1fr));
  border-top: 1px solid #8c8c8c;
}
.bad { grid-area: 2 / 2; }
.good { grid-area: 2 / 4; }
.name { grid-area: 1 / 1; padding-left: 2px; color: #1c1c1c; }
.call { grid-area: 4 / 1; padding-left: 2px; color: #c0532b; }
.box {
  display: grid;
  grid-template-rows: repeat(6, minmax(0, 1fr));
  padding-left: 6px;
  color: #cc6a4e;
  background:
    repeating-linear-gradient(90deg, #e9a898 0 6px, transparent 6px 9px) top / 100% 1px no-repeat,
    repeating-linear-gradient(90deg, #e9a898 0 6px, transparent 6px 9px) bottom / 100% 1px no-repeat,
    repeating-linear-gradient(#e9a898 0 6px, transparent 6px 9px) left / 1px 100% no-repeat,
    repeating-linear-gradient(#e9a898 0 6px, transparent 6px 9px) right / 1px 100% no-repeat;
}
.box p { grid-row: 2; }
.box .added { grid-row: 4; color: #5585bd; }
.box .added + .added { grid-row: 5; }
.call-box { grid-area: 5 / 1 / 11 / 3; }
.bad .result { grid-area: 15 / 1 / 19 / 4; }
.good .result { grid-area: 16 / 1 / 20 / 4; }
.total { display: grid; grid-template-columns: repeat(5, minmax(0, 1fr)); color: #333; }
.total .label { text-align: right; padding-right: 2px; color: #7c46ac; }
.total .expr { grid-column: 1 / 4; padding-left: 2px; color: #7c46ac; }
.max { grid-template-columns: 2fr 1fr; position: relative; }
.bad .max { grid-area: 20 / 1 / 21 / 4; }
.good .max { grid-area: 21 / 1 / 22 / 4; }
.bad .calc { grid-area: 22 / 1 / 23 / 5; padding-left: 2px; }
.good .calc { grid-area: 23 / 1 / 26 / 5; padding-left: 2px; }
.pointer { position: absolute; right: 7px; top: 7px; }

.step {
  grid-column: 5 / 13;
  display: grid;
  grid-template-columns: repeat(8, minmax(0, 1fr));
  grid-template-rows: repeat(10, minmax(0, 1fr));
  border-top: 1px solid #dedede;
}
.s1 { grid-row: 3 / 13; }
.s2 { grid-row: 13 / 23; }
.s3 { grid-row: 23 / 33; }
.row-name { grid-area: 1 / 1; padding-left: 3px; color: #6499d2; }
.ctx { grid-area: 2 / 1; padding-left: 3px; color: #c0532b; }
.step .box { grid-area: 3 / 1 / 9 / 3; }
.n4 { grid-area: 2 / 4 / 7 / 9; }
.sum4 { grid-area: 8 / 4 / 9 / 9; }
.n1 { grid-area: 2 / 4 / 4 / 9; }
.sum1 { grid-area: 5 / 4 / 6 / 9; }
.n2 { grid-area: 3 / 4 / 6 / 9; }
.sum2 { grid-area: 7 / 4 / 8 / 9; }
.n3 { grid-area: 3 / 4 / 5 / 9; }
.sum3 { grid-area: 6 / 4 / 7 / 9; }

/* Scroll bars */
.vscroll { width: 15px; padding: 1px 2px 0 3px; display: flex; flex-direction: column; border-top: 1px solid #c6c6c6; border-right: 1px solid #d6d6d6; }
.vscroll button { height: 10px; background: #fdfdfd; border: 1px solid #c8c8c8; }
.vscroll .thumb { flex: 1; margin-bottom: 12px; background: #fdfdfd; border: 1px solid #c8c8c8; }

/* Sheet tabs */
.tabbar { height: 19px; display: flex; align-items: center; color: #666; }
.tab-nav { width: 67px; display: flex; align-items: center; gap: 15px; padding-left: 17px; }
.dots { color: #217346; font-weight: 700; font-size: 9px; }
.tabs { flex: 1; height: 100%; display: flex; }
.tabs button { flex: 1 0 auto; padding: 0 6px; margin-top: 1px; height: 15px; border-left: 1px solid #b5b5b5; }
.tabs .on { height: 18px; margin-top: 0; background: #fdfdfd; border-left: 0; border-bottom: 1px solid #217346; color: #217346; font-weight: 700; }
.tabs .on + button { border-left: 0; }
.add { margin: 0 14px 0 8px; }
.hscroll { width: 224px; height: 10px; margin: 0 12px 0 9px; display: flex; }
.hscroll button { width: 10px; background: #fdfdfd; border: 1px solid #c8c8c8; }
.hscroll .thumb { width: 146px; margin-right: auto; background: #fdfdfd; border: 1px solid #c8c8c8; }

/* Status bar */
.status { height: 15px; display: flex; align-items: center; background: #f0f0f0; color: #555; padding: 0 6px 0 5px; }
.ready { width: 34px; }
.upload { margin: 0 12px 0 auto; display: flex; align-items: center; gap: 2px; }
.view { width: 26px; height: 15px; }
.view.on { background: #cfcfcf; }
.sign { width: 10px; text-align: center; font-size: 10px; }
.status input { width: 67px; height: 9px; appearance: none; background: linear-gradient(#b0b0b0, #b0b0b0) center / 100% 1px no-repeat; }
.status input::-webkit-slider-thumb { appearance: none; width: 3px; height: 7px; background: #555; }
.pct { width: 25px; text-align: right; }

/* Task bar */
.taskbar { height: 26px; display: flex; align-items: stretch; background: #020409; color: #e6e6e6; }
.start { width: 32px; }
.search { width: 229px; display: flex; align-items: center; gap: 5px; padding: 0 11px 0 6px; background: #333; }
.search input { flex: 1; font-size: 10px; color: #ddd; }
.search input::placeholder { color: #a6a6a6; opacity: 1; }
.apps { display: flex; }
.apps button { width: 33px; border: 3px solid transparent; border-width: 0 3px; }
.apps .open { background: linear-gradient(#76b9ed, #76b9ed) bottom / 100% 2px no-repeat; background-clip: padding-box; }
.apps .current { border: 0; background-color: #2f3138; }
.tray { margin-left: auto; display: flex; align-items: center; gap: 10px; padding-right: 15px; }
.clock { display: flex; flex-direction: column; align-items: center; line-height: 12px; margin-right: 2px; }
```
